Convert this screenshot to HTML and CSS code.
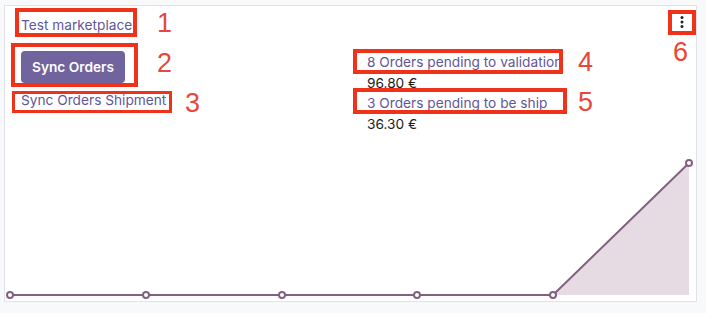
FILE: index.html
```html
<!DOCTYPE html>
<html>
<head>
<meta charset="utf-8">
<link rel="stylesheet" href="styles.css">
</head>
<body>
<div class="card">
  <div class="top">
    <div class="left">
      <a class="link title">Test marketplace</a>
      <button class="btn">Sync Orders</button>
      <a class="link">Sync Orders Shipment</a>
    </div>
    <div class="right">
      <a class="link line">8 Orders pending to validation</a>
      <div class="line amount">96.80 €</div>
      <a class="link line">3 Orders pending to be ship</a>
      <div class="line amount">36.30 €</div>
    </div>
    <div class="kebab">
      <svg width="4" height="12" viewBox="0 0 4 12"><circle cx="2" cy="1.6" r="1.5" fill="#222"/><circle cx="2" cy="6" r="1.5" fill="#222"/><circle cx="2" cy="10.4" r="1.5" fill="#222"/></svg>
    </div>
  </div>
  <svg class="chart" width="691" height="150" viewBox="0 0 691 150">
    <polygon points="548,144 684,12 684,144" fill="#e6dbe2"/>
    <polyline points="5,144 141,144 277,144 412,144 548,144 684,12" fill="none" stroke="#82607f" stroke-width="2"/>
    <g fill="#fff" stroke="#82607f" stroke-width="2">
      <circle cx="5" cy="144" r="3"/>
      <circle cx="141" cy="144" r="3"/>
      <circle cx="277" cy="144" r="3"/>
      <circle cx="412" cy="144" r="3"/>
      <circle cx="548" cy="144" r="3"/>
      <circle cx="684" cy="12" r="3"/>
    </g>
  </svg>
</div>

<div class="anno box b1"></div>
<div class="anno box b2"></div>
<div class="anno box b3"></div>
<div class="anno box b4"></div>
<div class="anno box b5"></div>
<div class="anno box b6"></div>
<div class="anno num n1">1</div>
<div class="anno num n2">2</div>
<div class="anno num n3">3</div>
<div class="anno num n4">4</div>
<div class="anno num n5">5</div>
<div class="anno num n6">6</div>
</body>
</html>
```
FILE: styles.css
```css
html, body {
  margin: 0;
  padding: 0;
}
body {
  background: #f8f9fb;
  font-family: Inter, "Liberation Sans", sans-serif;
  font-size: 13.7px;
  color: #111;
  width: 706px;
  height: 313px;
  position: relative;
  overflow: hidden;
}
.card {
  box-sizing: border-box;
  margin: 5px 0 0 4px;
  width: 693px;
  height: 297px;
  background: #fff;
  border: 1px solid #e1e3e8;
  display: flex;
  flex-direction: column;
}
.top {
  display: flex;
  padding: 9px 0 0 16px;
}
.left {
  width: 346px;
  display: flex;
  flex-direction: column;
  align-items: flex-start;
}
.link {
  color: #5f5698;
  line-height: 20px;
  white-space: nowrap;
}
.btn {
  margin: 16px 0 7px;
  width: 104px;
  height: 32px;
  border: none;
  border-radius: 4px;
  background: #71639e;
  color: #fff;
  font-family: inherit;
  font-size: 13.7px;
  font-weight: 600;
  padding: 0;
}
.right {
  flex: 1;
  margin-top: 37px;
  display: flex;
  flex-direction: column;
  align-items: flex-start;
}
.line {
  line-height: 20.5px;
}
.amount {
  color: #1a1a1a;
}
.kebab {
  width: 4px;
  margin: 1px 12px 0 0;
}
.kebab svg {
  display: block;
}
.chart {
  display: block;
  margin-top: auto;
}
.anno {
  position: absolute;
}
.box {
  box-sizing: border-box;
  border: 4px solid #f0321b;
}
.b1 { left: 15px; top: 8px; width: 122px; height: 29px; }
.b2 { left: 11px; top: 43px; width: 127px; height: 44px; }
.b3 { left: 12px; top: 91px; width: 160px; height: 22px; border-width: 3.5px; }
.b4 { left: 353px; top: 49px; width: 210px; height: 25px; }
.b5 { left: 353px; top: 88px; width: 214px; height: 26px; }
.b6 { left: 668px; top: 10px; width: 28px; height: 25px; }
.num {
  font-family: "Liberation Sans", sans-serif;
  font-size: 27px;
  line-height: 27px;
  color: #e8473b;
}
.n1 { left: 157px; top: 10px; }
.n2 { left: 157px; top: 50px; }
.n3 { left: 185px; top: 90px; }
.n4 { left: 578px; top: 49px; }
.n5 { left: 578px; top: 89px; }
.n6 { left: 673px; top: 39px; }
```
